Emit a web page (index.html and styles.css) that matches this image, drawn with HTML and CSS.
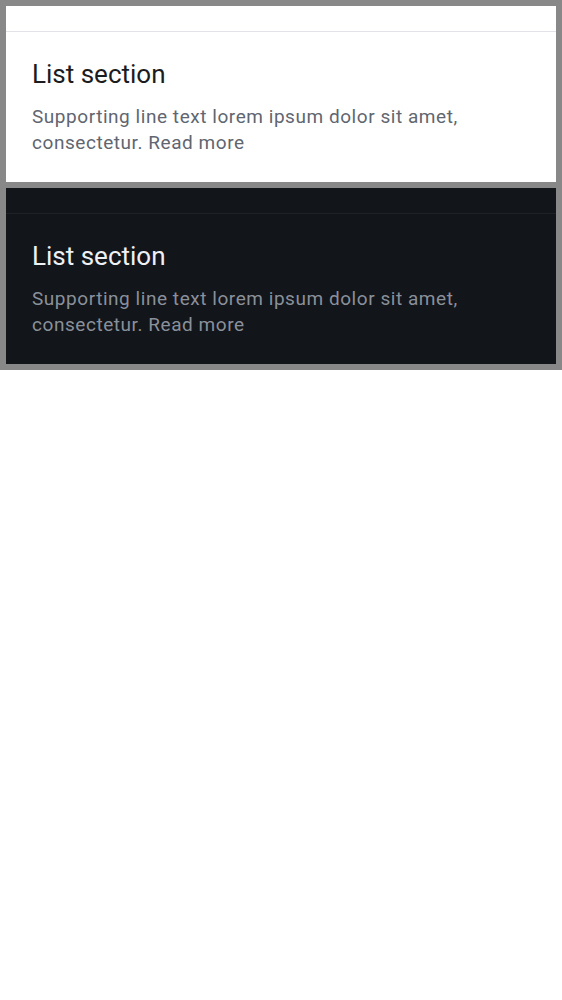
FILE: index.html
```html
<!DOCTYPE html>
<html>
<head>
<meta charset="utf-8">
<link rel="stylesheet" href="styles.css">
</head>
<body>
<div class="frame">
  <section class="panel light">
    <div class="top"></div>
    <div class="content">
      <h2 class="title">List section</h2>
      <p class="support">Supporting line text lorem ipsum dolor sit amet, consectetur. Read more</p>
    </div>
  </section>
  <section class="panel dark">
    <div class="top"></div>
    <div class="content">
      <h2 class="title">List section</h2>
      <p class="support">Supporting line text lorem ipsum dolor sit amet, consectetur. Read more</p>
    </div>
  </section>
</div>
</body>
</html>
```
FILE: styles.css
```css
html, body {
  margin: 0;
  padding: 0;
  background: #ffffff;
  font-family: Roboto, "Liberation Sans", sans-serif;
}
.frame {
  background: #888888;
  padding: 6px;
  display: flex;
  flex-direction: column;
  gap: 6px;
}
.panel {
  height: 176px;
  box-sizing: border-box;
  display: flex;
  flex-direction: column;
}
.top {
  height: 25px;
  border-bottom: 1px solid;
}
.content {
  padding: 26px 26px 0 26px;
}
.title {
  margin: 0;
  font-size: 26px;
  line-height: 32px;
  font-weight: 450;
  letter-spacing: 0;
}
.support {
  margin: 14px 0 0 0;
  font-size: 19px;
  line-height: 26px;
  letter-spacing: 0.55px;
  max-width: 460px;
}
.light { background: #ffffff; }
.light .top { border-color: #e2e3e8; }
.light .title { color: #1b1c20; }
.light .support { color: #5f6670; }
.dark { background: #12151a; }
.dark .top { border-color: #1e2228; }
.dark .title { color: #eef0f4; }
.dark .support { color: #8a909a; }
```
